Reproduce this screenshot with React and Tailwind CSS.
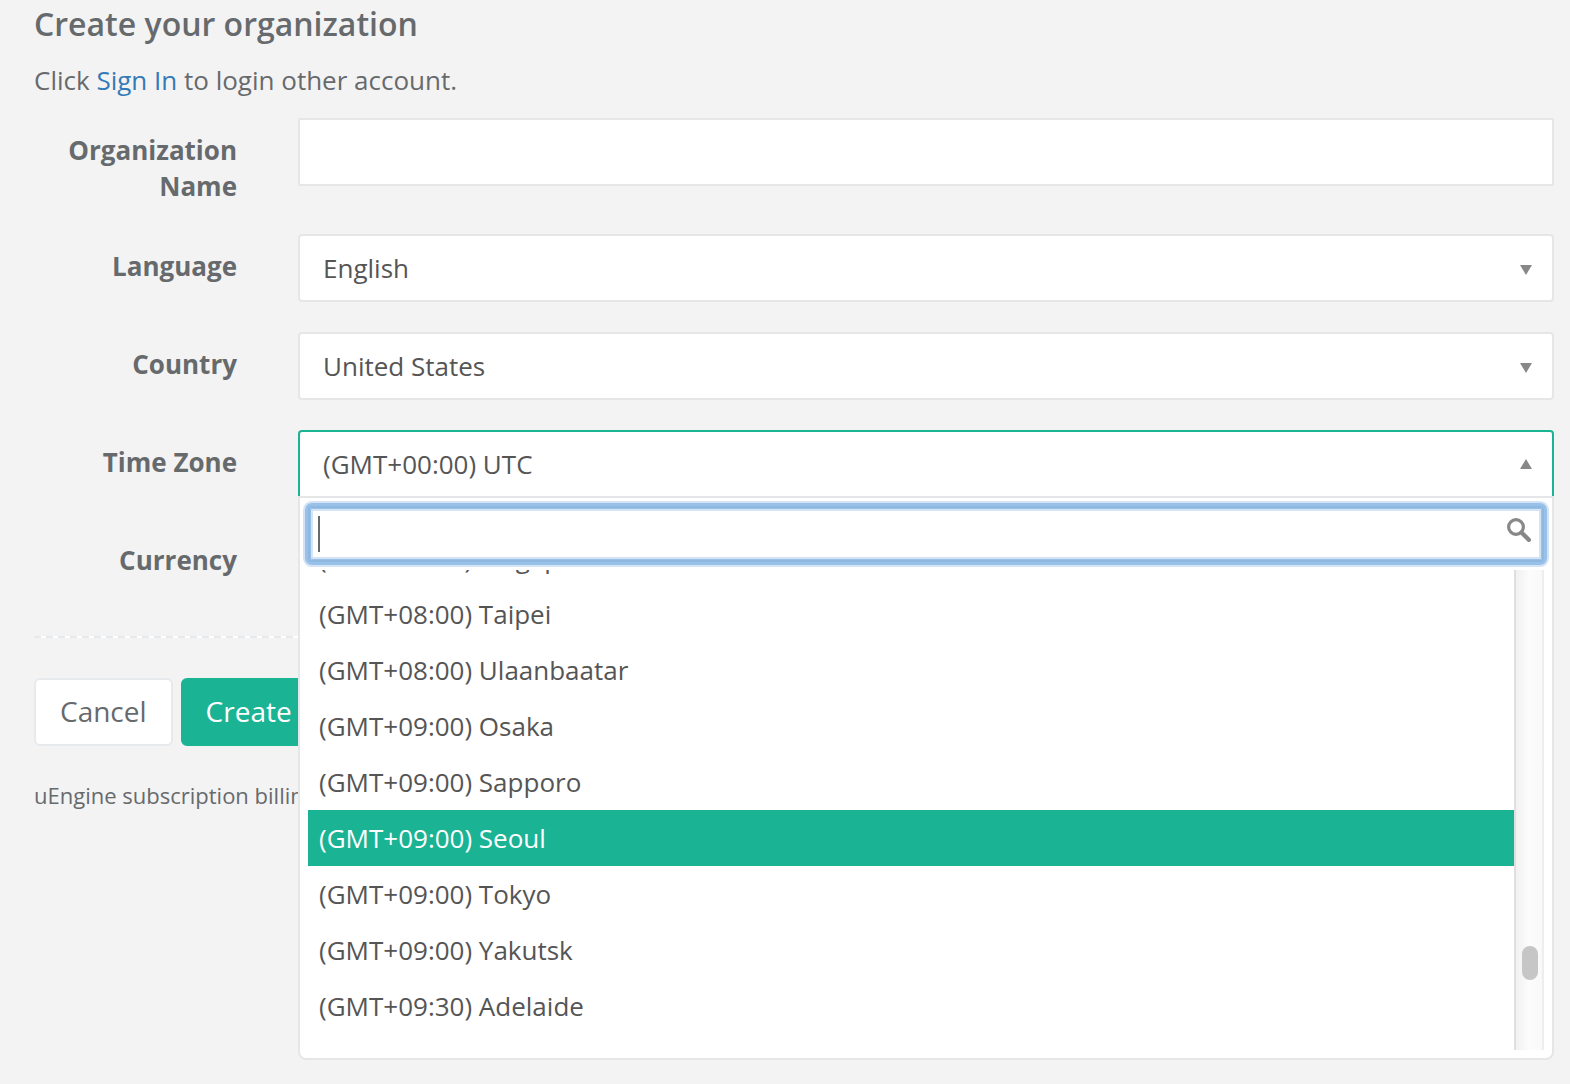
import React from "react";

const timeZones = [
  "(GMT+08:00) Singapore",
  "(GMT+08:00) Taipei",
  "(GMT+08:00) Ulaanbaatar",
  "(GMT+09:00) Osaka",
  "(GMT+09:00) Sapporo",
  "(GMT+09:00) Seoul",
  "(GMT+09:00) Tokyo",
  "(GMT+09:00) Yakutsk",
  "(GMT+09:30) Adelaide",
];

const selectBase =
  "block h-[68px] w-full appearance-none bg-white pl-[23px] pr-14 text-[26px] text-[#555555] outline-none";

function Arrow({ up }) {
  return (
    <svg
      viewBox="0 0 12 10"
      className={`pointer-events-none absolute right-[22px] h-[10px] w-3 fill-[#888888] ${up ? "top-[29px]" : "top-[31px]"}`}
      aria-hidden="true"
    >
      <path d={up ? "M0 10 L6 0 L12 10 Z" : "M0 0 L6 10 L12 0 Z"} />
    </svg>
  );
}

function Row({ id, label, children }) {
  return (
    <div className="grid grid-cols-[203px_1fr] items-start gap-x-[61px]">
      <label htmlFor={id} className="pt-[14px] text-right font-bold leading-9">
        {label}
      </label>
      <div className="relative">{children}</div>
    </div>
  );
}

function TimeZoneMenu() {
  return (
    <div className="absolute inset-x-0 top-[66px] z-10 rounded-b-lg border-2 border-[#e5e6e7] bg-white pb-2">
      <div className="relative px-2 pt-2">
        <input
          type="search"
          aria-label="Search time zones"
          className="block h-14 w-full appearance-none rounded-[4px] border-2 border-[#8fb8e0] bg-white pl-2 pr-12 text-[26px] caret-transparent shadow-[0_0_0_3px_#98c0e8,0_0_0_5px_#d4e4f5,inset_0_0_0_1px_#98c0e8,inset_0_0_0_3px_#d4e4f5] outline-none"
        />
        <span className="pointer-events-none absolute left-[18px] top-[18px] h-9 w-0.5 bg-[#676a6c]" />
        <svg
          viewBox="0 0 24 24"
          className="pointer-events-none absolute right-[21px] top-5 h-6 w-6 fill-none stroke-[#888888]"
          aria-hidden="true"
        >
          <circle cx="9" cy="9" r="7.4" strokeWidth="3.2" />
          <path d="M14.5 14.5 L21.8 21.8" strokeWidth="4.4" strokeLinecap="round" />
        </svg>
      </div>
      <div className="mt-2 flex h-[480px] overflow-hidden px-2">
        <ul role="listbox" aria-label="Time zones" className="-mt-10 flex-1">
          {timeZones.map((zone) => {
            const active = zone.endsWith("Seoul");
            return (
              <li
                key={zone}
                role="option"
                aria-selected={active}
                className={
                  active
                    ? "h-14 bg-[#1ab394] pl-[11px] leading-[56px] text-white"
                    : "h-14 pl-[11px] leading-[56px] text-[#555555]"
                }
              >
                {zone}
              </li>
            );
          })}
        </ul>
        <div className="w-[30px] border-x-2 border-l-[#dfdfdf] border-r-[#eeeeee] bg-linear-to-r from-[#f1f1f1] via-[#fcfcfc] to-[#f9f9f9] pl-1.5 pt-[376px]">
          <div className="h-[34px] w-4 rounded-lg bg-[#c6c6c6]" />
        </div>
      </div>
    </div>
  );
}

export default function App() {
  return (
    <main className="min-h-screen bg-[#f3f3f4] pb-6 pl-[34px] pr-4 font-['Open_Sans',sans-serif] text-[26px] leading-9 text-[#676a6c]">
      <h1 className="pt-1 text-[32px] font-semibold leading-10">
        Create your organization
      </h1>
      <p className="mt-[18px]">
        Click{" "}
        <a href="#signin" className="text-[#337ab7]">
          Sign In
        </a>{" "}
        to login other account.
      </p>
      <form className="mt-5" onSubmit={(e) => e.preventDefault()}>
        <div className="flex flex-col gap-[30px]">
          <Row id="org" label="Organization Name">
            <input
              id="org"
              type="text"
              className="block h-[68px] w-full rounded-[2px] border-2 border-[#e5e6e7] bg-white px-6 outline-none"
            />
          </Row>
          <Row id="language" label="Language">
            <select id="language" className={`${selectBase} rounded border-2 border-[#e5e6e7]`}>
              <option>English</option>
            </select>
            <Arrow />
          </Row>
          <Row id="country" label="Country">
            <select id="country" className={`${selectBase} rounded border-2 border-[#e5e6e7]`}>
              <option>United States</option>
            </select>
            <Arrow />
          </Row>
          <Row id="timezone" label="Time Zone">
            <select id="timezone" className={`${selectBase} rounded-t border-2 border-[#1ab394]`}>
              <option>(GMT+00:00) UTC</option>
            </select>
            <Arrow up />
            <TimeZoneMenu />
          </Row>
          <Row id="currency" label="Currency">
            <select id="currency" className={`${selectBase} rounded border-2 border-[#e5e6e7]`} />
          </Row>
        </div>
        <hr className="my-10 h-0.5 border-0 bg-[repeating-linear-gradient(to_right,#e7eaec_0px_7px,#ffffff_7px_12px)]" />
        <div className="flex gap-2 text-[28px]">
          <button
            type="button"
            className="h-[68px] rounded-md border-2 border-[#e7eaec] bg-white px-6 pb-0.5"
          >
            Cancel
          </button>
          <button
            type="submit"
            className="h-[68px] rounded-md border-2 border-[#1ab394] bg-[#1ab394] px-[23px] pb-0.5 text-white"
          >
            Create
          </button>
        </div>
      </form>
      <p className="mt-[31px] text-[22px]">uEngine subscription billing</p>
    </main>
  );
}
